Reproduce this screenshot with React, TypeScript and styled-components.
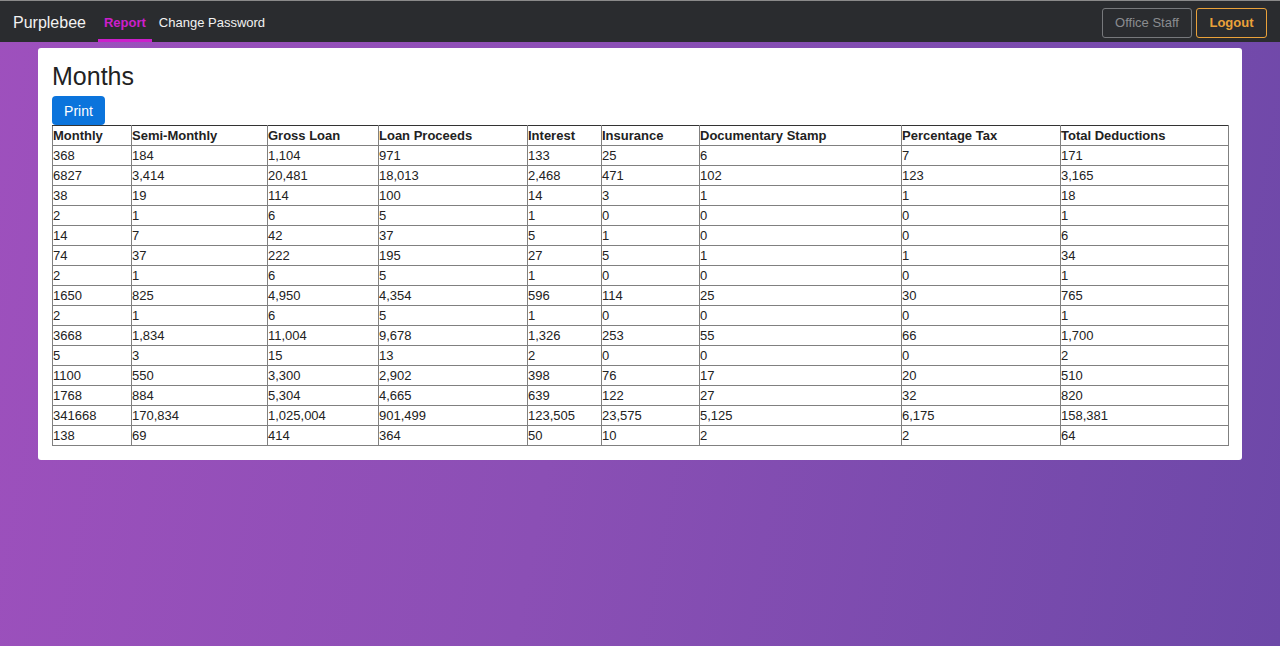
import React from "react";
import styled, { createGlobalStyle } from "styled-components";

const Global = createGlobalStyle`
  html, body { margin: 0; padding: 0; }
  body {
    font-family: "Liberation Sans", Arial, sans-serif;
    min-height: 646px;
    background: linear-gradient(100deg, #9e50bd 0%, #8b4fb5 45%, #6d48a8 100%);
  }
`;

const Page = styled.div`
  min-height: 646px;
  display: flex;
  flex-direction: column;
`;

const Nav = styled.nav`
  height: 42px;
  background: #2a2c2f;
  border-top: 1px solid #8a8a8a;
  box-sizing: border-box;
  display: flex;
  align-items: stretch;
  padding: 0 13px 0 13px;
`;

const Brand = styled.span`
  color: #f2f2f2;
  font-size: 16px;
  display: flex;
  align-items: center;
  padding-top: 2px;
  margin-right: 12px;
`;

const NavLink = styled.a<{ $active?: boolean }>`
  color: ${(p) => (p.$active ? "#cc1fcc" : "#f2f2f2")};
  font-weight: ${(p) => (p.$active ? 700 : 400)};
  font-size: 13px;
  display: flex;
  align-items: center;
  padding: 5px 6px 0 ${(p) => (p.$active ? "6px" : "7px")};
  border-bottom: 3px solid ${(p) => (p.$active ? "#cc1fcc" : "transparent")};
  box-sizing: border-box;
  text-decoration: none;
`;

const Spacer = styled.div`
  flex: 1;
`;

const NavButtons = styled.div`
  display: flex;
  align-items: center;
  gap: 4px;
  padding-top: 2px;
`;

const NavButton = styled.button<{ $tone: "muted" | "warn" }>`
  height: 30px;
  box-sizing: border-box;
  border-radius: 3px;
  background: transparent;
  font-family: "Liberation Sans", Arial, sans-serif;
  font-size: 13px;
  padding: 0;
  white-space: nowrap;
  border: 1px solid ${(p) => (p.$tone === "warn" ? "#eaa23a" : "#77797c")};
  color: ${(p) => (p.$tone === "warn" ? "#eaa23a" : "#8a8c8f")};
  font-weight: ${(p) => (p.$tone === "warn" ? 700 : 400)};
  width: ${(p) => (p.$tone === "warn" ? "71px" : "90px")};
`;

const Main = styled.main`
  padding: 6px 38px 0 38px;
`;

const Card = styled.section`
  background: #fff;
  border-radius: 3px;
  padding: 13px 14px 14px 14px;
`;

const Title = styled.h1`
  margin: 0 0 5px 0;
  font-weight: 400;
  font-size: 25px;
  line-height: 30px;
  color: #222;
`;

const PrintButton = styled.button`
  display: block;
  height: 29px;
  width: 53px;
  padding: 0;
  background: #0b74dc;
  color: #fff;
  border: none;
  border-radius: 4px;
  font-family: "Liberation Sans", Arial, sans-serif;
  font-size: 14px;
`;

const Table = styled.table`
  width: 1176px;
  border-collapse: collapse;
  border: 1px solid #333;
  font-size: 13px;
  color: #222;
  table-layout: fixed;
`;

const Th = styled.th`
  text-align: left;
  font-weight: 700;
  padding: 0;
  height: 19px;
  border: 1px solid #808080;
  border-top: 1px solid #333;
  white-space: nowrap;
`;

const Td = styled.td`
  padding: 0;
  height: 19px;
  border: 1px solid #808080;
  white-space: nowrap;
`;

const widths = [79, 136, 111, 149, 74, 98, 202, 159, 168];
const headers = [
  "Monthly",
  "Semi-Monthly",
  "Gross Loan",
  "Loan Proceeds",
  "Interest",
  "Insurance",
  "Documentary Stamp",
  "Percentage Tax",
  "Total Deductions",
];
const rows = [
  ["368", "184", "1,104", "971", "133", "25", "6", "7", "171"],
  ["6827", "3,414", "20,481", "18,013", "2,468", "471", "102", "123", "3,165"],
  ["38", "19", "114", "100", "14", "3", "1", "1", "18"],
  ["2", "1", "6", "5", "1", "0", "0", "0", "1"],
  ["14", "7", "42", "37", "5", "1", "0", "0", "6"],
  ["74", "37", "222", "195", "27", "5", "1", "1", "34"],
  ["2", "1", "6", "5", "1", "0", "0", "0", "1"],
  ["1650", "825", "4,950", "4,354", "596", "114", "25", "30", "765"],
  ["2", "1", "6", "5", "1", "0", "0", "0", "1"],
  ["3668", "1,834", "11,004", "9,678", "1,326", "253", "55", "66", "1,700"],
  ["5", "3", "15", "13", "2", "0", "0", "0", "2"],
  ["1100", "550", "3,300", "2,902", "398", "76", "17", "20", "510"],
  ["1768", "884", "5,304", "4,665", "639", "122", "27", "32", "820"],
  ["341668", "170,834", "1,025,004", "901,499", "123,505", "23,575", "5,125", "6,175", "158,381"],
  ["138", "69", "414", "364", "50", "10", "2", "2", "64"],
];

export default function App() {
  return (
    <Page>
      <Global />
      <Nav>
        <Brand>Purplebee</Brand>
        <NavLink $active>Report</NavLink>
        <NavLink>Change Password</NavLink>
        <Spacer />
        <NavButtons>
          <NavButton $tone="muted">Office Staff</NavButton>
          <NavButton $tone="warn">Logout</NavButton>
        </NavButtons>
      </Nav>
      <Main>
        <Card>
          <Title>Months</Title>
          <PrintButton>Print</PrintButton>
          <Table>
            <colgroup>
              {widths.map((w, i) => (
                <col key={i} style={{ width: w }} />
              ))}
            </colgroup>
            <thead>
              <tr>
                {headers.map((h) => (
                  <Th key={h}>{h}</Th>
                ))}
              </tr>
            </thead>
            <tbody>
              {rows.map((r, i) => (
                <tr key={i}>
                  {r.map((c, j) => (
                    <Td key={j}>{c}</Td>
                  ))}
                </tr>
              ))}
            </tbody>
          </Table>
        </Card>
      </Main>
    </Page>
  );
}
